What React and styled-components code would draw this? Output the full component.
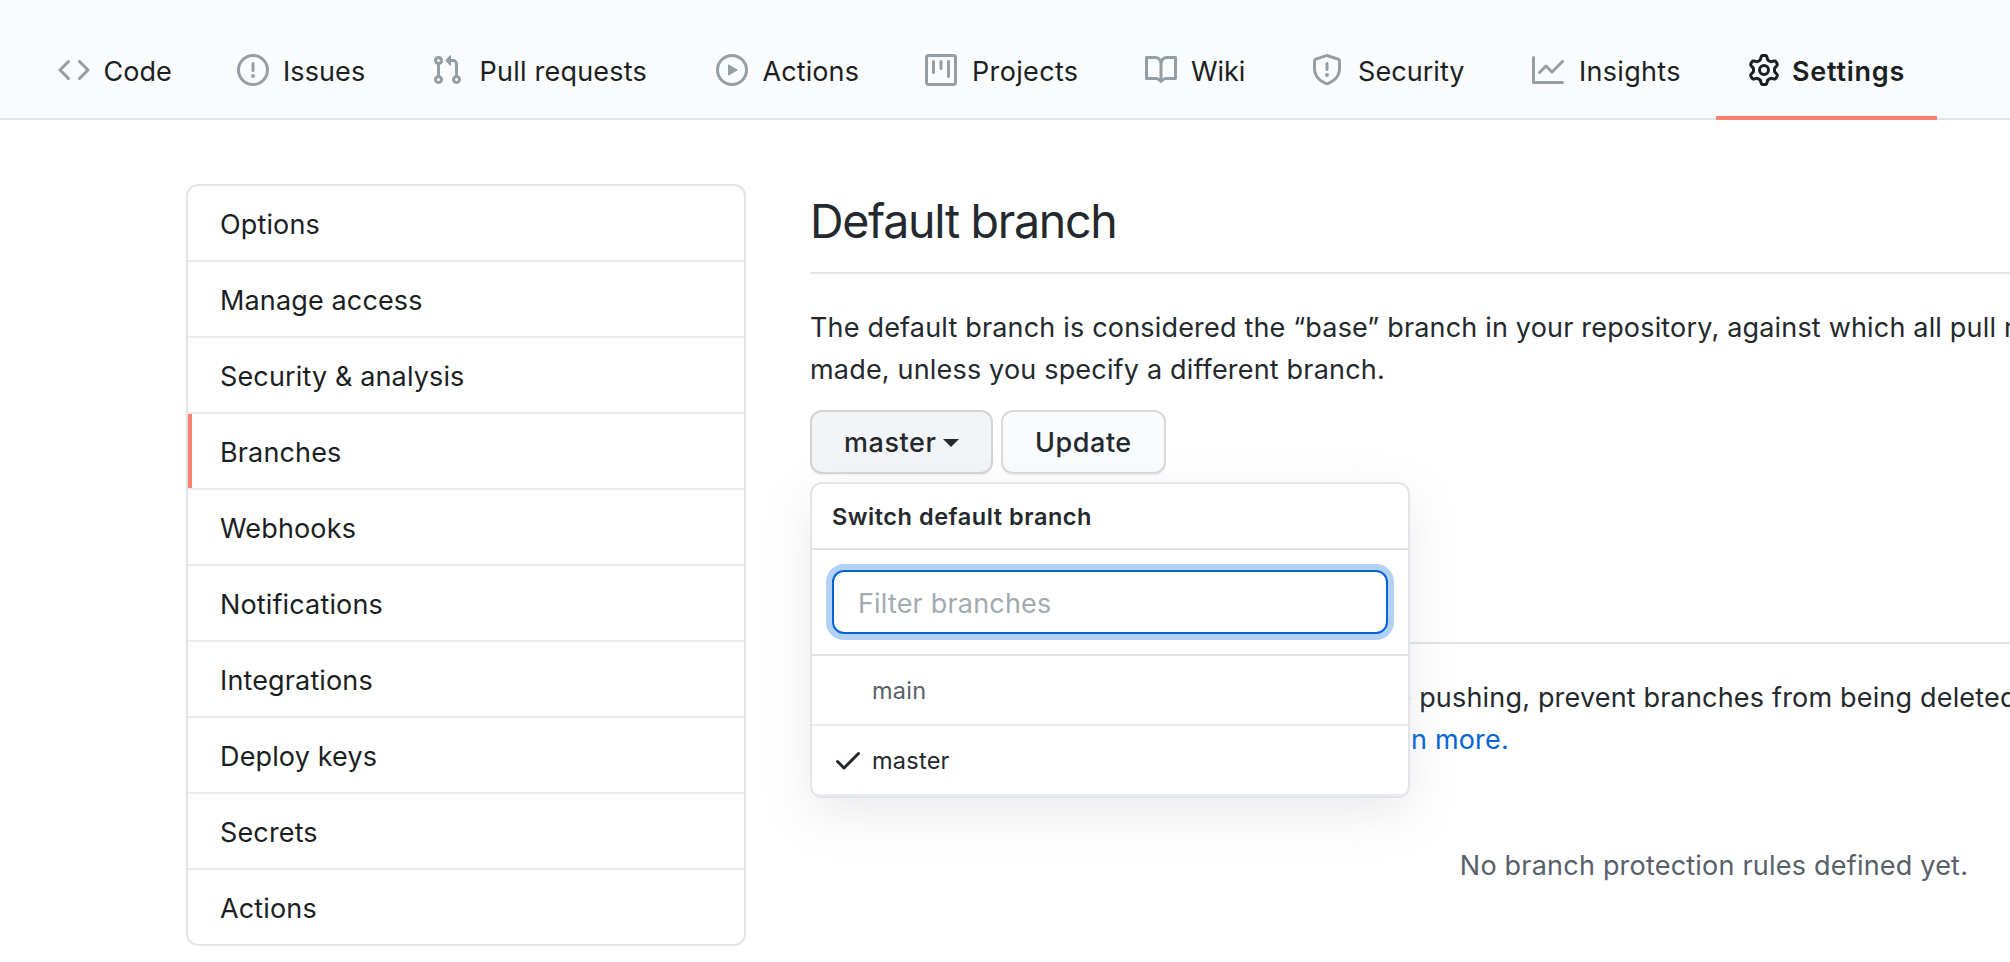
import React from "react";
import styled, { createGlobalStyle, css } from "styled-components";

const GlobalStyle = createGlobalStyle`
  * { box-sizing: border-box; }
  body {
    margin: 0;
    overflow: hidden;
    background: #fff;
    color: #24292e;
    font-family: Inter, "Liberation Sans", sans-serif;
    font-size: 27px;
    font-weight: 430;
    letter-spacing: 0.18px;
  }
`;

const Page = styled.div`
  width: 100%;
  height: 962px;
  overflow: hidden;
`;

const TabBar = styled.nav`
  display: flex;
  align-items: stretch;
  height: 120px;
  padding: 24px 0 0 26px;
  background: #fafbfc;
  box-shadow: inset 0 -2px 0 #e1e4e8;
`;

const Tab = styled.a`
  display: flex;
  flex: none;
  align-items: center;
  gap: ${(p) => p.$gap}px;
  width: ${(p) => p.$width}px;
  padding: 0 0 4px 32px;
  color: #1b1f23;
  letter-spacing: ${(p) => p.$spacing}px;
  white-space: nowrap;
  ${(p) =>
    p.$active &&
    css`
      padding-bottom: 0;
      border-bottom: 4px solid #f9826c;
      font-weight: 600;
    `}
`;

const TabLabel = styled.span`
  padding-top: 2px;
`;

const Octicon = styled.svg`
  display: block;
  flex: none;
  width: 32px;
  height: 32px;
  fill: ${(p) => p.$color};
`;

const Columns = styled.div`
  display: flex;
  align-items: flex-start;
  gap: 64px;
  padding: 64px 0 0 186px;
`;

const Sidebar = styled.nav`
  flex: none;
  width: 560px;
  overflow: hidden;
  border: 2px solid #e1e4e8;
  border-radius: 12px;
`;

const SidebarItem = styled.a`
  display: flex;
  align-items: center;
  height: 76px;
  padding: 2px 0 0 32px;
  border-bottom: 2px solid #eaecef;
  color: #1b1f23;
  letter-spacing: 0.14px;
  ${(p) =>
    p.$current &&
    css`
      background: linear-gradient(#f9826c, #f9826c) 0 0 / 4px 100% no-repeat;
    `}
  &:last-child {
    height: 74px;
    border-bottom: 0;
  }
`;

const Main = styled.main`
  flex: none;
  width: 1808px;
`;

const Heading = styled.h2`
  height: 90px;
  margin: 0;
  border-bottom: 2px solid #e1e4e8;
  font-size: 46.5px;
  font-weight: 440;
  letter-spacing: -1.3px;
  line-height: 74px;
`;

const Paragraph = styled.p`
  margin: 33px 0 19px;
  line-height: 42px;
  white-space: nowrap;
`;

const Controls = styled.div`
  position: relative;
  display: flex;
  gap: 8px;
  height: 64px;
  margin-bottom: 80px;
`;

const Button = styled.button`
  display: flex;
  align-items: center;
  width: ${(p) => p.$width}px;
  height: 64px;
  padding: 1px 0 0 32px;
  border: 2px solid rgba(27, 31, 35, 0.15);
  border-radius: 12px;
  background: ${(p) => (p.$open ? "#f3f4f6" : "#fafbfc")};
  box-shadow: 0 2px 0 rgba(27, 31, 35, 0.04);
  color: #24292e;
  font: 530 27px Inter, sans-serif;
  letter-spacing: 0.55px;
`;

const Caret = styled.span`
  margin-left: 6.5px;
  border: 8px solid transparent;
  border-top-color: currentColor;
  border-bottom: 0;
`;

const Menu = styled.div`
  position: absolute;
  z-index: 2;
  top: 72px;
  left: 0;
  width: 600px;
  overflow: hidden;
  border: 2px solid #e1e4e8;
  border-radius: 12px;
  background: #fff;
  box-shadow: 0 16px 48px rgba(149, 157, 165, 0.2);
  font-size: 23.5px;
`;

const MenuTitle = styled.div`
  display: flex;
  align-items: center;
  height: 66px;
  padding: 0 20px;
  border-bottom: 2px solid #dfe2e6;
  font-weight: 600;
  letter-spacing: 0.53px;
`;

const FilterArea = styled.div`
  padding: 20px;
  border-bottom: 2px solid #dfe2e6;
`;

const FilterInput = styled.input`
  display: block;
  width: 100%;
  height: 64px;
  padding: 2px 22px 0 24px;
  border: 2px solid #0366d6;
  border-radius: 12px;
  outline: none;
  box-shadow: 0 0 0 6px rgba(3, 102, 214, 0.3);
  font: 430 27px Inter, sans-serif;
  letter-spacing: 0.18px;
  &::placeholder {
    color: #a3aab1;
    opacity: 1;
  }
`;

const MenuItem = styled.div`
  display: flex;
  align-items: center;
  height: 70px;
  padding: 0 20px 0 ${(p) => (p.$checked ? 20 : 60)}px;
  gap: 8px;
  border-bottom: 2px solid #eaecef;
  color: ${(p) => (p.$checked ? "#24292e" : "#586069")};
  letter-spacing: 0.25px;
`;

const Link = styled.a`
  color: #0366d6;
`;

const Blank = styled.p`
  margin: 84px 0 0;
  color: #586069;
  line-height: 42px;
  letter-spacing: 0.21px;
  text-align: center;
`;

const icons = {
  code: "M4.72 3.22a.75.75 0 011.06 1.06L2.06 8l3.72 3.72a.75.75 0 11-1.06 1.06L.47 8.53a.75.75 0 010-1.06l4.25-4.25zm6.56 0a.75.75 0 10-1.06 1.06L13.94 8l-3.72 3.72a.75.75 0 101.06 1.06l4.25-4.25a.75.75 0 000-1.06l-4.25-4.25z",
  issue: "M8 1.5a6.5 6.5 0 100 13 6.5 6.5 0 000-13zM0 8a8 8 0 1116 0A8 8 0 010 8zm9 3a1 1 0 11-2 0 1 1 0 012 0zm-.25-6.25a.75.75 0 00-1.5 0v3.5a.75.75 0 001.5 0v-3.5z",
  pull: "M7.177 3.073L9.573.677A.25.25 0 0110 .854v4.792a.25.25 0 01-.427.177L7.177 3.427a.25.25 0 010-.354zM3.75 2.5a.75.75 0 100 1.5.75.75 0 000-1.5zm-2.25.75a2.25 2.25 0 113 2.122v5.256a2.251 2.251 0 11-1.5 0V5.372A2.25 2.25 0 011.5 3.25zM11 2.5h-1V4h1a1 1 0 011 1v5.628a2.251 2.251 0 101.5 0V5A2.5 2.5 0 0011 2.5zm1 10.25a.75.75 0 111.5 0 .75.75 0 01-1.5 0zM3.75 12a.75.75 0 100 1.5.75.75 0 000-1.5z",
  play: "M1.5 8a6.5 6.5 0 1113 0 6.5 6.5 0 01-13 0zM8 0a8 8 0 100 16A8 8 0 008 0zM6.379 5.227A.25.25 0 006 5.442v5.117a.25.25 0 00.379.214l4.264-2.559a.25.25 0 000-.428L6.379 5.227z",
  project: "M1.75 0A1.75 1.75 0 000 1.75v12.5C0 15.216.784 16 1.75 16h12.5A1.75 1.75 0 0016 14.25V1.75A1.75 1.75 0 0014.25 0H1.75zM1.5 1.75a.25.25 0 01.25-.25h12.5a.25.25 0 01.25.25v12.5a.25.25 0 01-.25.25H1.75a.25.25 0 01-.25-.25V1.75zM11.75 3a.75.75 0 00-.75.75v7.5a.75.75 0 001.5 0v-7.5a.75.75 0 00-.75-.75zm-8.25.75a.75.75 0 011.5 0v5.5a.75.75 0 01-1.5 0v-5.5zM8 3a.75.75 0 00-.75.75v3.5a.75.75 0 001.5 0v-3.5A.75.75 0 008 3z",
  book: "M0 1.75A.75.75 0 01.75 1h4.253c1.227 0 2.317.59 3 1.501A3.744 3.744 0 0111.006 1h4.245a.75.75 0 01.75.75v10.5a.75.75 0 01-.75.75h-4.507a2.25 2.25 0 00-1.591.659l-.622.621a.75.75 0 01-1.06 0l-.622-.621A2.25 2.25 0 005.258 13H.75a.75.75 0 01-.75-.75V1.75zm8.755 3a2.25 2.25 0 012.25-2.25H14.5v9h-3.757c-.71 0-1.4.201-1.992.572l.004-7.322zm-1.504 7.324l.004-5.073-.002-2.253A2.25 2.25 0 005.003 2.5H1.5v9h3.757a3.75 3.75 0 011.994.574z",
  shield: "M7.467.133a1.75 1.75 0 011.066 0l5.25 1.68A1.75 1.75 0 0115 3.48V7c0 1.566-.32 3.182-1.303 4.682-.983 1.498-2.585 2.813-5.032 3.855a1.7 1.7 0 01-1.33 0c-2.447-1.042-4.049-2.357-5.032-3.855C1.32 10.182 1 8.566 1 7V3.48a1.75 1.75 0 011.217-1.667l5.25-1.68zm.61 1.429a.25.25 0 00-.153 0l-5.25 1.68a.25.25 0 00-.174.238V7c0 1.358.275 2.666 1.057 3.86.784 1.194 2.121 2.34 4.366 3.297a.2.2 0 00.154 0c2.245-.956 3.582-2.104 4.366-3.298C13.225 9.666 13.5 8.36 13.5 7V3.48a.25.25 0 00-.174-.237l-5.25-1.68zM9 10.5a1 1 0 11-2 0 1 1 0 012 0zm-.25-5.75a.75.75 0 10-1.5 0v3a.75.75 0 001.5 0v-3z",
  graph: "M1.5 1.75a.75.75 0 00-1.5 0v12.5c0 .414.336.75.75.75h14.5a.75.75 0 000-1.5H1.5V1.75zm14.28 2.53a.75.75 0 00-1.06-1.06L10 7.94 7.53 5.47a.75.75 0 00-1.06 0L3.22 8.72a.75.75 0 001.06 1.06L7 7.06l2.47 2.47a.75.75 0 001.06 0l5.25-5.25z",
  gear: "M7.429 1.525a6.593 6.593 0 011.142 0c.036.003.108.036.137.146l.289 1.105c.147.56.55.967.997 1.189.174.086.341.183.501.29.417.278.97.423 1.53.27l1.102-.303c.11-.03.175.016.195.046.219.31.41.641.573.989.014.031.022.11-.059.19l-.815.806c-.411.406-.562.957-.53 1.456a4.588 4.588 0 010 .582c-.032.499.119 1.05.53 1.456l.815.806c.08.08.073.159.059.19a6.494 6.494 0 01-.573.99c-.02.029-.086.074-.195.045l-1.103-.303c-.559-.153-1.112-.008-1.529.27-.16.107-.327.204-.5.29-.449.222-.851.628-.998 1.189l-.289 1.105c-.029.11-.101.143-.137.146a6.613 6.613 0 01-1.142 0c-.036-.003-.108-.037-.137-.146l-.289-1.105c-.147-.56-.55-.967-.997-1.189a4.502 4.502 0 01-.501-.29c-.417-.278-.97-.423-1.53-.27l-1.102.303c-.11.03-.175-.016-.195-.046a6.492 6.492 0 01-.573-.989c-.014-.031-.022-.11.059-.19l.815-.806c.411-.406.562-.957.53-1.456a4.587 4.587 0 010-.582c.032-.499-.119-1.05-.53-1.456l-.815-.806c-.08-.08-.073-.159-.059-.19a6.44 6.44 0 01.573-.99c.02-.029.086-.075.195-.045l1.103.303c.559.153 1.112.008 1.529-.27.16-.107.327-.204.5-.29.449-.222.851-.628.998-1.189l.289-1.105c.029-.11.101-.143.137-.146zM8 0c-.236 0-.47.01-.701.03-.743.065-1.29.615-1.458 1.261l-.29 1.106c-.017.066-.078.158-.211.224a5.994 5.994 0 00-.668.386c-.123.082-.233.09-.3.071L3.27 2.776c-.644-.177-1.392.02-1.82.63a7.977 7.977 0 00-.704 1.217c-.315.675-.111 1.422.363 1.891l.815.806c.05.048.098.147.088.294a6.084 6.084 0 000 .772c.01.147-.038.246-.088.294l-.815.806c-.474.469-.678 1.216-.363 1.891.2.428.436.835.704 1.218.428.609 1.176.806 1.82.63l1.103-.303c.066-.019.176-.011.299.071.213.143.436.272.668.386.133.066.194.158.212.224l.289 1.106c.169.646.715 1.196 1.458 1.26a8.094 8.094 0 001.402 0c.743-.064 1.29-.614 1.458-1.26l.29-1.106c.017-.066.078-.158.211-.224a5.98 5.98 0 00.668-.386c.123-.082.233-.09.3-.071l1.102.302c.644.177 1.392-.02 1.82-.63.268-.382.505-.789.704-1.217.315-.675.111-1.422-.364-1.891l-.814-.806c-.05-.048-.098-.147-.088-.294a6.1 6.1 0 000-.772c-.01-.147.039-.246.088-.294l.814-.806c.475-.469.679-1.216.364-1.891a7.992 7.992 0 00-.704-1.218c-.428-.609-1.176-.806-1.82-.63l-1.103.303c-.066.019-.176.011-.299-.071a5.991 5.991 0 00-.668-.386c-.133-.066-.194-.158-.212-.224L10.16 1.29C9.99.645 9.444.095 8.701.031A8.094 8.094 0 008 0zm1.5 8a1.5 1.5 0 11-3 0 1.5 1.5 0 013 0zM11 8a3 3 0 11-6 0 3 3 0 016 0z",
  check: "M13.78 4.22a.75.75 0 010 1.06l-7.25 7.25a.75.75 0 01-1.06 0L2.22 9.28a.75.75 0 011.06-1.06L6 10.94l6.72-6.72a.75.75 0 011.06 0z",
};

const tabs = [
  { label: "Code", icon: "code", width: 179, gap: 13.5, spacing: 0 },
  { label: "Issues", icon: "issue", width: 194, gap: 14, spacing: 0.1 },
  { label: "Pull requests", icon: "pull", width: 285, gap: 16.5, spacing: 0.22 },
  { label: "Actions", icon: "play", width: 209, gap: 14.5, spacing: 0.1 },
  { label: "Projects", icon: "project", width: 220, gap: 15, spacing: 0.35 },
  { label: "Wiki", icon: "book", width: 166, gap: 14, spacing: -0.1 },
  { label: "Security", icon: "shield", width: 221, gap: 15, spacing: 0.06 },
  { label: "Insights", icon: "graph", width: 216, gap: 15, spacing: 0.3 },
  { label: "Settings", icon: "gear", width: 221, gap: 12, spacing: 0.75, active: true },
];

const sections = [
  "Options",
  "Manage access",
  "Security & analysis",
  "Branches",
  "Webhooks",
  "Notifications",
  "Integrations",
  "Deploy keys",
  "Secrets",
  "Actions",
];

function Icon({ name, color }) {
  return (
    <Octicon viewBox="0 0 16 16" $color={color} aria-hidden="true">
      <path fillRule="evenodd" d={icons[name]} />
    </Octicon>
  );
}

function BranchMenu() {
  return (
    <Menu>
      <MenuTitle>Switch default branch</MenuTitle>
      <FilterArea>
        <FilterInput placeholder="Filter branches" />
      </FilterArea>
      <MenuItem>main</MenuItem>
      <MenuItem $checked>
        <Icon name="check" color="#24292e" />
        master
      </MenuItem>
    </Menu>
  );
}

export default function App() {
  return (
    <Page>
      <GlobalStyle />
      <TabBar>
        {tabs.map((t) => (
          <Tab key={t.label} $width={t.width} $gap={t.gap} $spacing={t.spacing} $active={t.active}>
            <Icon name={t.icon} color={t.active ? "#1b1f23" : "#959da5"} />
            <TabLabel>{t.label}</TabLabel>
          </Tab>
        ))}
      </TabBar>
      <Columns>
        <Sidebar>
          {sections.map((s) => (
            <SidebarItem key={s} $current={s === "Branches"}>
              {s}
            </SidebarItem>
          ))}
        </Sidebar>
        <Main>
          <Heading>Default branch</Heading>
          <Paragraph>
            The default branch is considered the “base” branch in your repository, against which all pull requests and code commits are automatically
            <br />
            made, unless you specify a different branch.
          </Paragraph>
          <Controls>
            <Button $width={183} $open>
              master
              <Caret />
            </Button>
            <Button $width={165}>Update</Button>
            <BranchMenu />
          </Controls>
          <Heading>Branch protection rules</Heading>
          <Paragraph>
            Define branch protection rules to disable force pushing, prevent branches from being deleted, and optionally require status checks before
            <br />
            merging. New to branch protection rules? <Link>Learn more.</Link>
          </Paragraph>
          <Blank>No branch protection rules defined yet.</Blank>
        </Main>
      </Columns>
    </Page>
  );
}
